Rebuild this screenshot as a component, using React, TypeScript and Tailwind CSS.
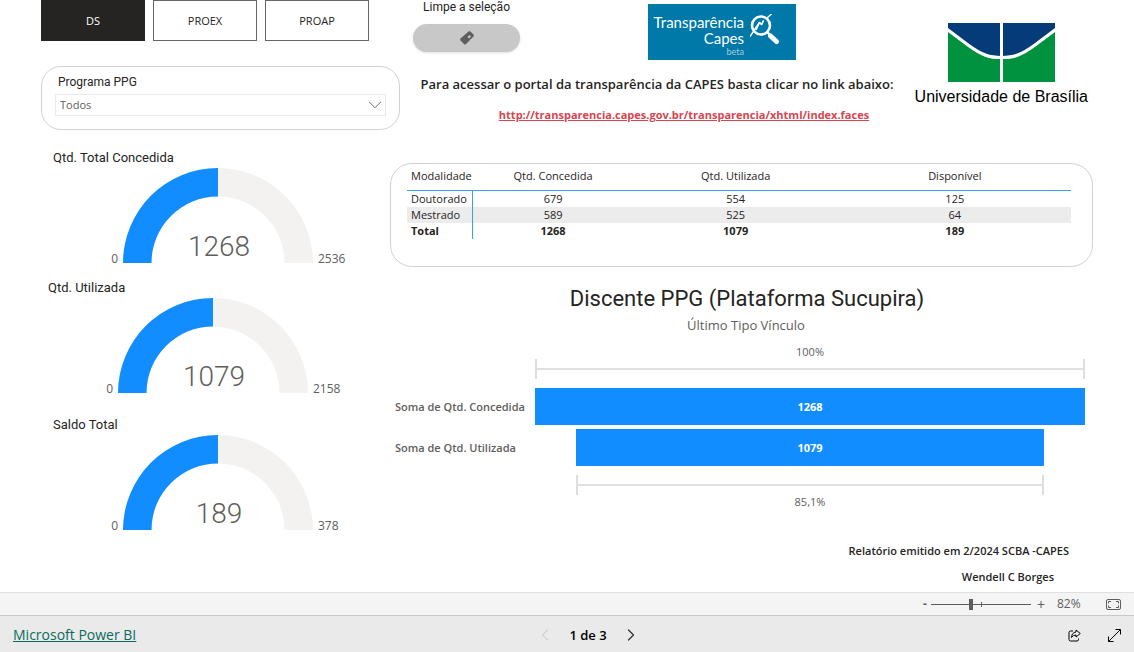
import { useState } from 'react';
import { ChevronDown, ChevronLeft, ChevronRight } from 'lucide-react';
import { clsx } from 'clsx';

interface GaugeProps {
  title: string;
  value: number;
  max: number;
  className?: string;
}

interface Row {
  label: string;
  granted: number;
  used: number;
  available: number;
}

const PROGRAMS = ['DS', 'PROEX', 'PROAP'];

const ROWS: Row[] = [
  { label: 'Doutorado', granted: 679, used: 554, available: 125 },
  { label: 'Mestrado', granted: 589, used: 525, available: 64 },
];

const FUNNEL = [
  { label: 'Soma de Qtd. Concedida', value: 1268 },
  { label: 'Soma de Qtd. Utilizada', value: 1079 },
];

function Gauge({ title, value, max, className }: GaugeProps) {
  // point on the outer / inner arc where the filled part ends
  const angle = Math.PI * (1 - value / max);
  const x = (r: number) => 95 + r * Math.cos(angle);
  const y = (r: number) => 95 - r * Math.sin(angle);

  return (
    <section className={className}>
      <h2 className="pt-0.5 font-[Roboto,sans-serif] text-[13px] leading-5 text-[#252423]">{title}</h2>
      <div className="flex items-end text-[12px] leading-4 text-[#605e5c]">
        <span className="-mb-1 w-[70px] pr-[5px] text-right">0</span>
        <div className="relative">
          <svg width="190" height="95" viewBox="0 0 190 95" className="block">
            <path d="M0 95A95 95 0 0 1 190 95H161.500A66.500 66.500 0 0 0 28.500 95Z" fill="#f3f2f1" />
            <path
              d={`M0 95A95 95 0 0 1 ${x(95)} ${y(95)}L${x(66.5)} ${y(66.5)}A66.5 66.5 0 0 0 28.5 95Z`}
              fill="#118dff"
            />
          </svg>
          <span className="absolute inset-x-0 bottom-0 pl-0.5 text-center font-[Roboto,sans-serif] text-[28px] leading-8 font-light">
            {value}
          </span>
        </div>
        <span className="-mb-1 pl-[5px]">{max}</span>
      </div>
    </section>
  );
}

function Bracket() {
  return (
    <div className="flex h-5 items-center border-x-2 border-[#dedede]">
      <div className="h-0.5 w-full bg-[#e0e0e0]" />
    </div>
  );
}

function CapesLogo() {
  return (
    <a
      href="http://transparencia.capes.gov.br/transparencia/xhtml/index.faces"
      className="flex h-14 w-[148px] items-start gap-1.5 bg-[#0079a8] pt-2.5 pl-[5px] text-white"
    >
      <span className="w-[91px] text-right font-[Lato,sans-serif]">
        <span className="block text-[15px] leading-4">Transparência</span>
        <span className="block text-[15px] leading-4">Capes</span>
        <span className="block text-[9px] leading-3 text-[#a6cbdc]">beta</span>
      </span>
      <svg width="31" height="32" viewBox="0 0 31 32" fill="none" stroke="#fff">
        <circle cx="11" cy="11.500" r="9" strokeWidth="2.600" />
        <path d="M0 22.500L9 9L11.500 10.500L13.500 6.500M17 4L21.500 0" strokeWidth="1.400" />
        <path d="M6 16L9.500 8.500L12 10L13.500 6.500" strokeWidth="1.400" />
        <path d="M17 18L21 22" strokeWidth="2.400" />
        <path d="M20.500 22L26.500 27.500" strokeWidth="5" strokeLinecap="round" />
      </svg>
    </a>
  );
}

function UnbLogo() {
  return (
    <div className="flex flex-col items-center">
      <svg width="107" height="59" viewBox="0 0 107 59">
        <rect width="107" height="59" fill="#00923f" />
        <path d="M0 0H107V7L87 22C72 33 65 34.500 53.500 34.500C42 34.500 35 33 20 22L0 7Z" fill="#043b78" />
        <path
          d="M-2 5.500L20 22C35 33 42 34.500 53.500 34.500C65 34.500 72 33 87 22L109 5.500"
          fill="none"
          stroke="#fff"
          strokeWidth="3.200"
        />
        <rect x="52" width="3" height="59" fill="#fff" />
      </svg>
      <span className="mt-[5px] font-['Liberation_Sans',Arial,sans-serif] text-[16px] leading-5 whitespace-nowrap text-black">
        Universidade de Brasília
      </span>
    </div>
  );
}

function ModalityTable() {
  const total = (key: 'granted' | 'used' | 'available') => ROWS.reduce((sum, r) => sum + r[key], 0);

  return (
    <div className="h-[104px] rounded-[22px] border border-[#d2d2d2] pt-[3px] pr-[21px] pl-4">
      <table className="w-full table-fixed border-separate border-spacing-0 text-center text-[11px] leading-4 text-[#252423]">
        <colgroup>
          <col className="w-[10%]" />
          <col className="w-[24%]" />
          <col className="w-[31%]" />
          <col className="w-[35%]" />
        </colgroup>
        <thead>
          <tr className="align-top *:h-6 *:border-b *:border-b-[#3a9ff5] *:pt-px *:font-normal">
            <th className="pl-1 text-left">Modalidade</th>
            <th>Qtd. Concedida</th>
            <th>Qtd. Utilizada</th>
            <th>Disponível</th>
          </tr>
        </thead>
        <tbody>
          {ROWS.map((row) => (
            <tr key={row.label} className="even:bg-[#ececec]">
              <th className="border-r border-r-[#3a9ff5] pl-1 text-left font-normal">{row.label}</th>
              <td>{row.granted}</td>
              <td>{row.used}</td>
              <td>{row.available}</td>
            </tr>
          ))}
        </tbody>
        <tfoot>
          <tr className="font-bold">
            <th className="border-r border-r-[#3a9ff5] pl-1 text-left">Total</th>
            <td>{total('granted')}</td>
            <td>{total('used')}</td>
            <td>{total('available')}</td>
          </tr>
        </tfoot>
      </table>
    </div>
  );
}

function Funnel() {
  const top = FUNNEL[0].value;
  const width = (value: number) => `${(value / top) * 100}%`;
  const last = FUNNEL[FUNNEL.length - 1].value;

  return (
    <section className="mt-4 pr-2 pl-[5px] text-[11px] leading-4 text-[#605e5c]">
      <h2 className="pl-3.5 text-center font-[Roboto,sans-serif] text-[22px] leading-8 text-[#252423]">
        Discente PPG (Plataforma Sucupira)
      </h2>
      <p className="pl-3 text-center text-[13px] leading-5">Último Tipo Vínculo</p>

      <div className="mt-2.5 grid grid-cols-[140px_1fr]">
        <div className="col-start-2 mb-[9px]">
          <p className="text-center leading-[14px]">100%</p>
          <Bracket />
        </div>
        {FUNNEL.map((step) => (
          <div key={step.label} className="col-span-2 mb-1 grid grid-cols-subgrid items-center">
            <span className="font-semibold">{step.label}</span>
            <div
              className="mx-auto flex h-[37px] items-center justify-center bg-[#118dff] font-bold text-white"
              style={{ width: width(step.value) }}
            >
              {step.value}
            </div>
          </div>
        ))}
        <div className="col-start-2 mx-auto mt-[5px]" style={{ width: width(last) }}>
          <Bracket />
          <p className="text-center leading-[14px]">85,1%</p>
        </div>
      </div>
    </section>
  );
}

export default function App() {
  const [program, setProgram] = useState('DS');

  return (
    <div className="flex min-h-screen flex-col bg-white font-['Open_Sans','Noto_Sans',sans-serif]">
      <main className="flex-1">
        <header className="flex h-[130px] pr-[46px] pl-[41px]">
          <div className="w-[359px] shrink-0">
            <div className="flex gap-2">
              {PROGRAMS.map((name) => (
                <button
                  key={name}
                  onClick={() => setProgram(name)}
                  className={clsx(
                    'h-[41px] w-[104px] border pt-0.5 text-[11px]',
                    name === program
                      ? 'border-[#252423] bg-[#252423] text-white'
                      : 'border-[#666] bg-white text-[#252423]',
                  )}
                >
                  {name}
                </button>
              ))}
            </div>
            <div className="mt-[25px] h-16 rounded-[20px] border border-[#d2d2d2] px-[13px] pt-[5px]">
              <label
                htmlFor="ppg"
                className="block pl-[3px] font-[Roboto,sans-serif] text-[12px] leading-5 text-[#252423]"
              >
                Programa PPG
              </label>
              <div className="relative mt-0.5">
                <select
                  id="ppg"
                  className="block h-[22px] w-full appearance-none border border-[#eaeaea] bg-white pl-1 text-[11px] text-[#605e5c]"
                >
                  <option>Todos</option>
                </select>
                <ChevronDown
                  className="pointer-events-none absolute top-0 right-0 size-[22px] text-[#605e5c]"
                  strokeWidth={1}
                />
              </div>
            </div>
          </div>

          <div className="ml-[13px] w-[488px] shrink-0">
            <div className="flex h-[60px] gap-32">
              <div className="w-[107px]">
                <p className="text-center font-[Roboto,sans-serif] text-[12px] leading-[14px] text-[#252423]">
                  Limpe a seleção
                </p>
                <button
                  aria-label="Limpe a seleção"
                  className="mt-2.5 flex h-7 w-full items-center justify-center rounded-full bg-[#c8c8c8] shadow-sm"
                >
                  <svg width="16" height="16" viewBox="0 0 16 16">
                    <path
                      d="M9.500 1.500Q10.500 .8 11.500 1.500L14.500 4.500Q15.300 5.500 14.500 6.500L7 14Q6 15 5 14L1.500 10.500Q.7 9.500 1.500 8.500Z"
                      fill="#605e5c"
                    />
                    <path d="M8.500 7L10.500 5L12 6.500L10 8.500Z" fill="#c8c8c8" />
                  </svg>
                </button>
              </div>
              <div className="pt-1">
                <CapesLogo />
              </div>
            </div>
            <p className="mt-3.5 text-center text-[13px] leading-5 font-semibold whitespace-nowrap text-[#252423]">
              Para acessar o portal da transparência da CAPES basta clicar no link abaixo:
            </p>
            <p className="mt-[13px] pl-[54px] text-center text-[11px] leading-4 font-bold">
              <a
                href="http://transparencia.capes.gov.br/transparencia/xhtml/index.faces"
                className="text-[#d64550] underline"
              >
                http://transparencia.capes.gov.br/transparencia/xhtml/index.faces
              </a>
            </p>
          </div>

          <div className="ml-auto pt-[23px]">
            <UnbLogo />
          </div>
        </header>

        <div className="flex pr-[41px] pl-[41px]">
          <div className="w-[349px] shrink-0 pt-4">
            <Gauge title="Qtd. Total Concedida" value={1268} max={2536} className="ml-3" />
            <Gauge title="Qtd. Utilizada" value={1079} max={2158} className="mt-[13px] ml-[7px]" />
            <Gauge title="Saldo Total" value={189} max={378} className="mt-5 ml-3" />
          </div>
          <div className="min-w-0 flex-1 pt-[33px]">
            <ModalityTable />
            <Funnel />
            <div className="mt-[29px] text-right text-[11px] leading-[26px] font-semibold text-[#252423]">
              <p className="pr-6">Relatório emitido em 2/2024 SCBA -CAPES</p>
              <p className="pr-[39px]">Wendell C Borges</p>
            </div>
          </div>
        </div>
      </main>

      <div className="flex h-[23px] items-center justify-end border-t border-[#e0e0e0] bg-[#f4f4f4] pr-[13px] text-[12px] text-[#605e5c]">
        <button aria-label="Diminuir zoom" className="px-1 font-bold">
          -
        </button>
        <div className="relative flex items-center">
          <input
            type="range"
            aria-label="Zoom"
            min={10}
            max={190}
            defaultValue={82}
            className="h-3 w-[100px] appearance-none bg-transparent [&::-webkit-slider-runnable-track]:h-px [&::-webkit-slider-runnable-track]:bg-[#605e5c] [&::-webkit-slider-thumb]:-mt-[5px] [&::-webkit-slider-thumb]:h-[11px] [&::-webkit-slider-thumb]:w-1 [&::-webkit-slider-thumb]:appearance-none [&::-webkit-slider-thumb]:bg-[#605e5c]"
          />
          <span className="pointer-events-none absolute left-1/2 h-[5px] w-px bg-[#605e5c]" />
        </div>
        <button aria-label="Aumentar zoom" className="px-1.5 text-[14px]">
          +
        </button>
        <span className="w-[55px] pl-1.5">82%</span>
        <button aria-label="Ajustar à página">
          <svg width="15" height="11" viewBox="0 0 15 11" fill="none" stroke="#605e5c" className="block">
            <rect x=".5" y=".5" width="14" height="10" rx="1.500" />
            <path d="M5 2.500H2.500V4.500M10 2.500H12.500V4.500M5 8.500H2.500V6.500M10 8.500H12.500V6.500" />
          </svg>
        </button>
      </div>

      <footer className="grid h-[37px] grid-cols-3 items-center border-t border-[#c8c8c8] bg-[#eaeaea] px-[13px] pt-0.5 text-black">
        <a href="https://powerbi.microsoft.com" className="text-[14px] leading-5 text-[#0b6a5d] underline">
          Microsoft Power BI
        </a>
        <div className="flex items-center justify-center gap-3.5 pl-[42px]">
          <button aria-label="Página anterior" disabled className="text-[#c0c0c0]">
            <ChevronLeft className="size-5" strokeWidth={1.2} />
          </button>
          <span className="text-[13px] leading-5 font-semibold">1 de 3</span>
          <button aria-label="Próxima página" className="text-[#333]">
            <ChevronRight className="size-5" strokeWidth={1.5} />
          </button>
        </div>
        <div className="flex items-center justify-end gap-[27px]">
          <button aria-label="Compartilhar">
            <svg width="13" height="13" viewBox="0 0 13 13" fill="none" stroke="currentColor" strokeLinejoin="round">
              <path d="M5 2H2.500Q1 2 1 3.500V10.500Q1 12 2.500 12H9Q10.500 12 10.500 10.500V9.500" />
              <path d="M8 1L12.300 4.500L8 8V6Q5 6 3.500 8.500Q3.800 3.500 8 3Z" />
            </svg>
          </button>
          <button aria-label="Tela inteira">
            <svg width="13" height="13" viewBox="0 0 13 13" fill="none" stroke="currentColor">
              <path d="M.5 12.500L12.500 .5M7.500 .5H12.500V5.500M.5 7.500V12.500H5.500" />
            </svg>
          </button>
        </div>
      </footer>
    </div>
  );
}
